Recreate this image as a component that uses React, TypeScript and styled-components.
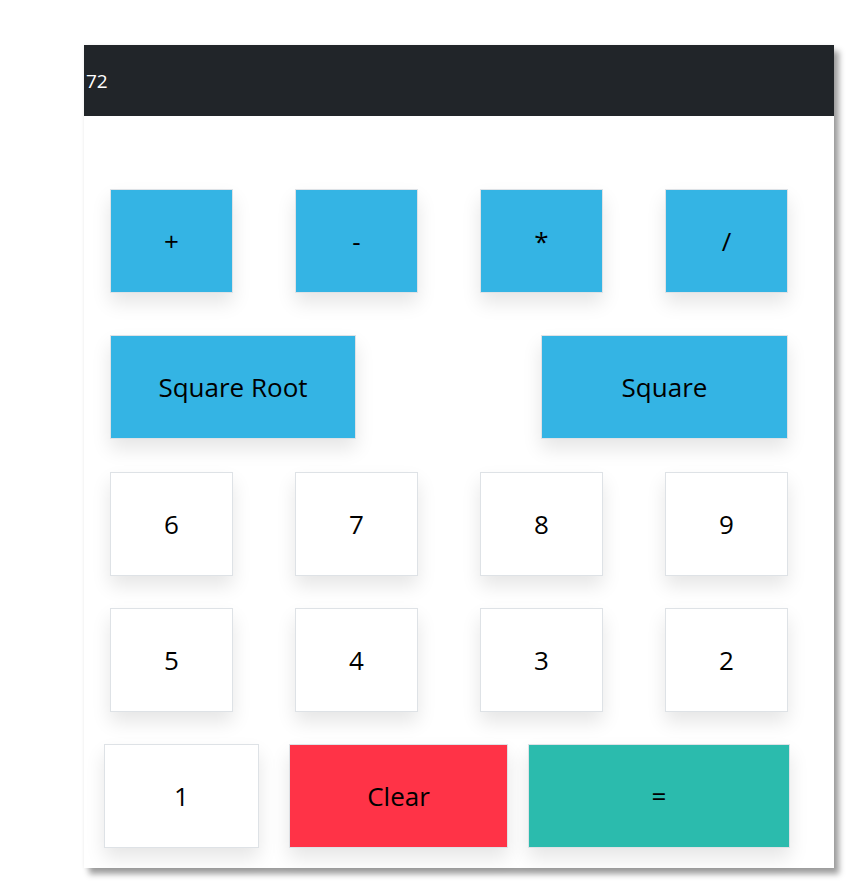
import React from "react";
import styled, { createGlobalStyle } from "styled-components";

const GlobalStyle = createGlobalStyle`
  html, body {
    margin: 0;
    background: #ffffff;
    font-family: "Open Sans", "Noto Sans", sans-serif;
  }
`;

type Tone = "blue" | "white" | "red" | "teal";

const tones: Record<Tone, string> = {
  blue: "#34b4e4",
  white: "#ffffff",
  red: "#ff3347",
  teal: "#2bbbad",
};

interface Key {
  label: string;
  width: number;
  tone: Tone;
}

interface Row {
  gaps: number[];
  indent: number;
  top: number;
  keys: Key[];
}

const quad = (labels: string[], tone: Tone): Key[] =>
  labels.map((label) => ({ label, width: 123, tone }));

const rows: Row[] = [
  { gaps: [62, 62, 62], indent: 26, top: 73, keys: quad(["+", "-", "*", "/"], "blue") },
  {
    gaps: [185],
    indent: 26,
    top: 42,
    keys: [
      { label: "Square Root", width: 246, tone: "blue" },
      { label: "Square", width: 247, tone: "blue" },
    ],
  },
  { gaps: [62, 62, 62], indent: 26, top: 33, keys: quad(["6", "7", "8", "9"], "white") },
  { gaps: [62, 62, 62], indent: 26, top: 32, keys: quad(["5", "4", "3", "2"], "white") },
  {
    gaps: [30, 20],
    indent: 20,
    top: 32,
    keys: [
      { label: "1", width: 155, tone: "white" },
      { label: "Clear", width: 219, tone: "red" },
      { label: "=", width: 262, tone: "teal" },
    ],
  },
];

const App: React.FC = () => {
  return (
    <Page>
      <GlobalStyle />
      <Card>
        <Display>72</Display>
        <Keypad>
          {rows.map((row, i) => (
            <KeyRow key={i} $indent={row.indent} $top={row.top}>
              {row.keys.map((k, j) => (
                <KeyButton
                  key={k.label}
                  $width={k.width}
                  $tone={k.tone}
                  $before={j === 0 ? 0 : row.gaps[j - 1]}
                >
                  {k.label}
                </KeyButton>
              ))}
            </KeyRow>
          ))}
        </Keypad>
      </Card>
    </Page>
  );
};

export default App;

const Page = styled.div`
  min-height: 884px;
  box-sizing: border-box;
  padding: 45px 0 0 84px;
`;

const Card = styled.div`
  width: 750px;
  height: 823px;
  background: #ffffff;
  box-shadow: 5px 6px 6px rgba(0, 0, 0, 0.38), 0 0 4px rgba(0, 0, 0, 0.06);
`;

const Display = styled.div`
  height: 71px;
  background: #212529;
  color: #ffffff;
  font-size: 19px;
  display: flex;
  align-items: center;
  padding-left: 2px;
`;

const Keypad = styled.div`
  display: flex;
  flex-direction: column;
`;

const KeyRow = styled.div<{ $indent: number; $top: number }>`
  display: flex;
  padding-left: ${(p) => p.$indent}px;
  margin-top: ${(p) => p.$top}px;
`;

const KeyButton = styled.button<{ $width: number; $tone: Tone; $before: number }>`
  width: ${(p) => p.$width}px;
  height: 104px;
  margin-left: ${(p) => p.$before}px;
  background: ${(p) => tones[p.$tone]};
  border: 1px solid #dee2e6;
  box-shadow: 0 10px 18px rgba(0, 0, 0, 0.1);
  color: #000000;
  font-family: "Open Sans", "Noto Sans", sans-serif;
  font-size: 26px;
  padding: 0;
  cursor: pointer;
`;
